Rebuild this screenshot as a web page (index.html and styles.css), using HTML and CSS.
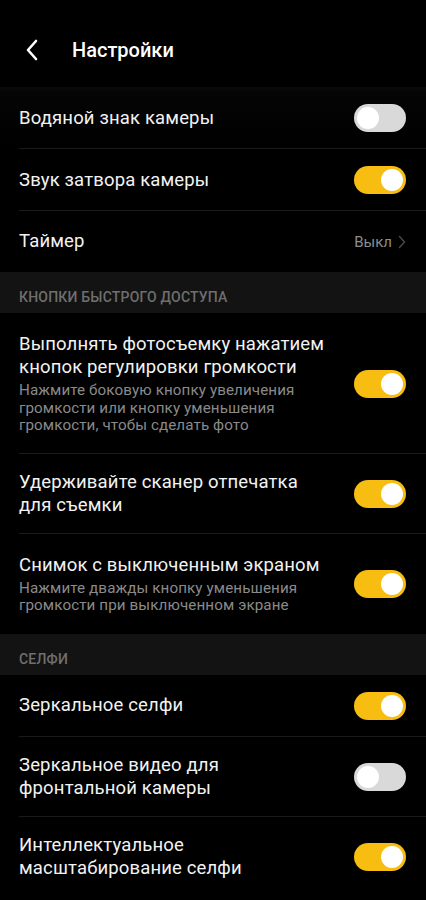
FILE: index.html
```html
<!DOCTYPE html>
<html lang="ru">
<head>
    <meta charset="UTF-8">
    <meta name="viewport" content="width=device-width, initial-scale=1.0">
    <title>Настройки</title>
    <link rel="stylesheet" href="styles.css">
</head>
<body>

    <header class="topbar">
        <button class="back-btn" aria-label="Назад">
            <svg width="14" height="22" viewBox="0 0 14 22">
                <path d="M11 2 L3 11 L11 20" fill="none" stroke="#fff" stroke-width="2.6" stroke-linecap="round" stroke-linejoin="round"/>
            </svg>
        </button>
        <h1>Настройки</h1>
    </header>

    <div class="list">
        <div class="row">
            <div class="row-text"><div class="title">Водяной знак камеры</div></div>
            <span class="toggle"></span>
        </div>
        <div class="row">
            <div class="row-text"><div class="title">Звук затвора камеры</div></div>
            <span class="toggle on"></span>
        </div>
        <div class="row last">
            <div class="row-text"><div class="title">Таймер</div></div>
            <span class="value">Выкл
                <svg width="8" height="14" viewBox="0 0 8 14">
                    <path d="M1.5 1.5 L6.5 7 L1.5 12.5" fill="none" stroke="#4a4a4a" stroke-width="1.4" stroke-linecap="round" stroke-linejoin="round"/>
                </svg>
            </span>
        </div>

        <div class="section">КНОПКИ БЫСТРОГО ДОСТУПА</div>

        <div class="row tall">
            <div class="row-text">
                <div class="title">Выполнять фотосъемку нажатием кнопок регулировки громкости</div>
                <div class="sub">Нажмите боковую кнопку увеличения громкости или кнопку уменьшения громкости, чтобы сделать фото</div>
            </div>
            <span class="toggle on"></span>
        </div>
        <div class="row">
            <div class="row-text"><div class="title">Удерживайте сканер отпечатка<br>для съемки</div></div>
            <span class="toggle on"></span>
        </div>
        <div class="row tall last">
            <div class="row-text">
                <div class="title">Снимок с выключенным экраном</div>
                <div class="sub">Нажмите дважды кнопку уменьшения громкости при выключенном экране</div>
            </div>
            <span class="toggle on"></span>
        </div>

        <div class="section">СЕЛФИ</div>

        <div class="row">
            <div class="row-text"><div class="title">Зеркальное селфи</div></div>
            <span class="toggle on"></span>
        </div>
        <div class="row">
            <div class="row-text"><div class="title">Зеркальное видео для<br>фронтальной камеры</div></div>
            <span class="toggle"></span>
        </div>
        <div class="row last">
            <div class="row-text"><div class="title">Интеллектуальное<br>масштабирование селфи</div></div>
            <span class="toggle on"></span>
        </div>
    </div>

</body>
</html>
```

FILE: styles.css
```css
body {
    margin: 0;
    background-color: #000;
    color: #f2f2f2;
    font-family: Roboto, "Noto Sans", sans-serif;
    width: 426px;
    overflow: hidden;
}

.topbar {
    display: flex;
    align-items: center;
    height: 87px;
    padding: 13px 0 0 25px;
    box-sizing: border-box;
}

.back-btn {
    background: none;
    border: none;
    padding: 0;
    width: 16px;
    height: 24px;
    display: flex;
    align-items: center;
}

.topbar h1 {
    margin: 0 0 0 31px;
    font-size: 20px;
    font-weight: 500;
    color: #fff;
}

.list {
    background: linear-gradient(#0a0a0a, #050505 6px, #030303 30px, #000 60px);
}

.row {
    display: flex;
    align-items: center;
    min-height: 61px;
    padding: 17px 20px 17px 19px;
    box-sizing: border-box;
    position: relative;
}

.row::after {
    content: "";
    position: absolute;
    left: 19px;
    right: 0;
    bottom: 0;
    height: 1px;
    background-color: #1a1a1a;
}

.row.last::after {
    display: none;
}

.row.tall {
    padding-top: 20px;
    padding-bottom: 19px;
}

.row-text {
    flex: 1;
    padding-right: 4px;
}

.title {
    font-size: 18.5px;
    line-height: 23px;
    letter-spacing: 0.15px;
    color: #f2f2f2;
}

.sub {
    font-size: 15.2px;
    line-height: 17.5px;
    letter-spacing: 0.1px;
    color: #8a8a8a;
    margin-top: 3px;
    padding-right: 20px;
}

.toggle {
    flex: none;
    width: 52px;
    height: 28px;
    border-radius: 14px;
    background-color: #d9d9d9;
    position: relative;
}

.toggle::before {
    content: "";
    position: absolute;
    top: 3px;
    left: 3px;
    width: 22px;
    height: 22px;
    border-radius: 50%;
    background-color: #fff;
}

.toggle.on {
    background-color: #f7bd10;
}

.toggle.on::before {
    left: 27px;
}

.value {
    display: flex;
    align-items: center;
    gap: 6px;
    font-size: 15px;
    color: #8c8c8c;
}

.section {
    background-color: #131313;
    color: #6f6f6f;
    font-size: 14px;
    font-weight: 500;
    letter-spacing: 0.2px;
    height: 41px;
    padding: 17px 19px 0;
    box-sizing: border-box;
    line-height: 16px;
}
```
